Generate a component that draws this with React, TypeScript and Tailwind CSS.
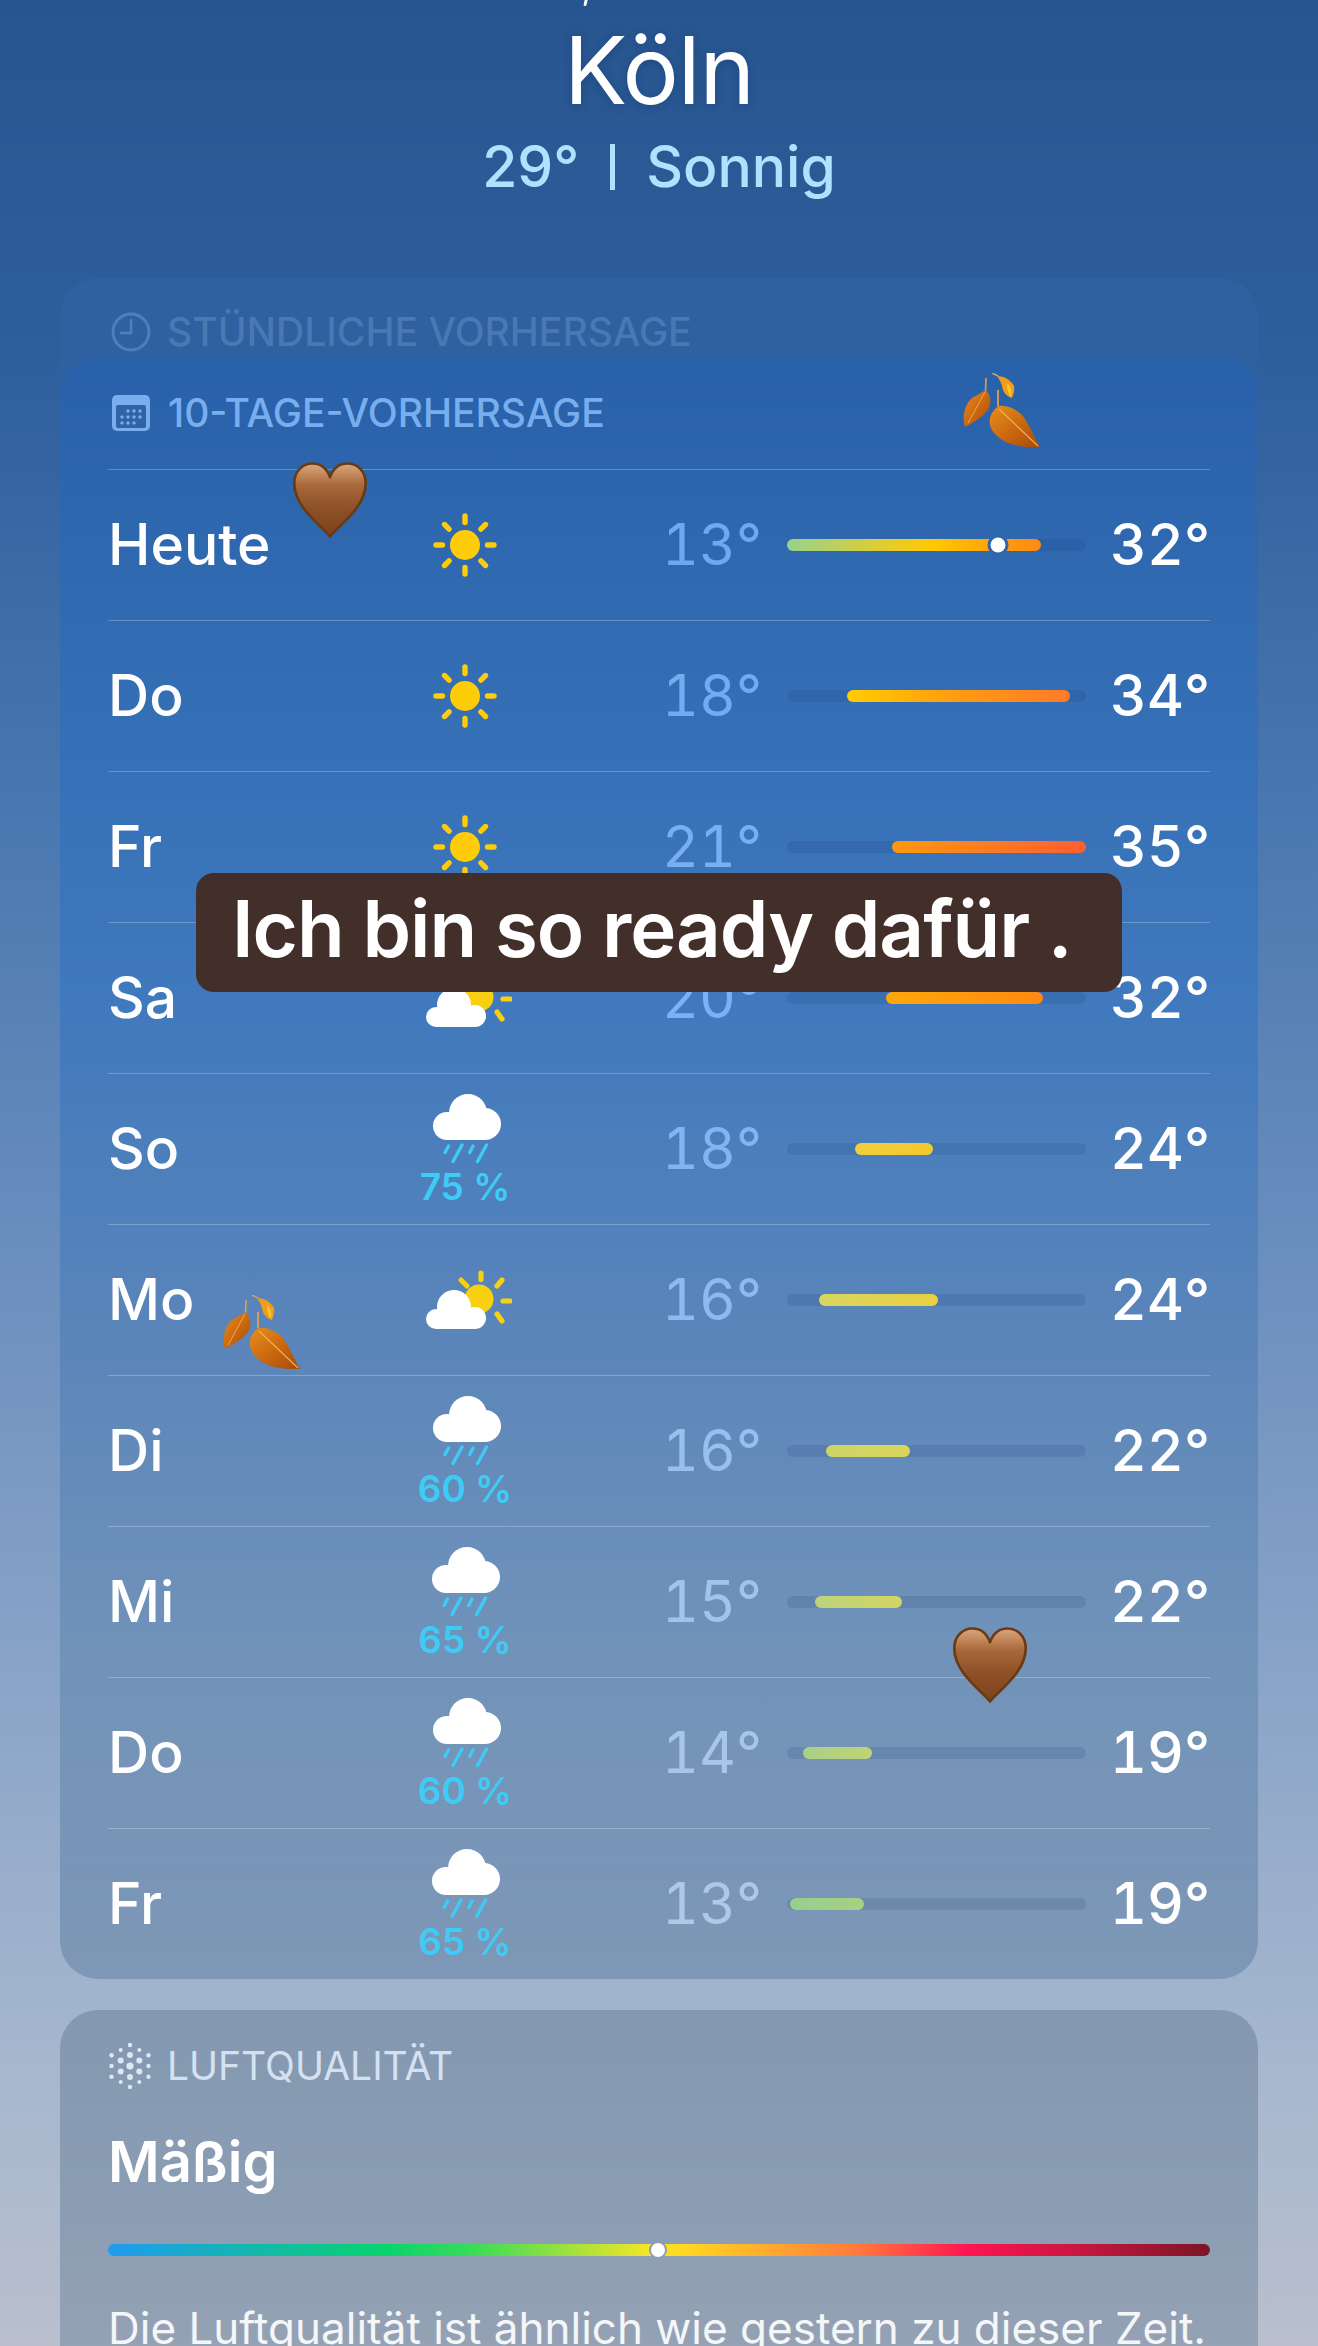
import React from "react";

type Kind = "sun" | "suncloud" | "rain";
const rows: { day: string; kind: Kind; pct?: string; low: string; high: string; start: number; end: number; grad: string; lowCls: string; dot?: number }[] = [
  { day: "Heute", kind: "sun", low: "13°", high: "32°", start: 0, end: 254, grad: "linear-gradient(90deg,#96d38c,#e5cc2b 40%,#ffc800 58%,#ff9a0f 85%,#ff8a0f)", lowCls: "text-[#6fa8ee]", dot: 211 },
  { day: "Do", kind: "sun", low: "18°", high: "34°", start: 60, end: 283, grad: "linear-gradient(90deg,#ffcc00,#ff9a10 50%,#ff7a2a)", lowCls: "text-[#73abf0]" },
  { day: "Fr", kind: "sun", low: "21°", high: "35°", start: 105, end: 299, grad: "linear-gradient(90deg,#ff9810,#ff5e30)", lowCls: "text-[#78aff2]" },
  { day: "Sa", kind: "suncloud", low: "20°", high: "32°", start: 99, end: 256, grad: "linear-gradient(90deg,#ffa80a,#ff8a10)", lowCls: "text-[#7cb2f3]" },
  { day: "So", kind: "rain", pct: "75 %", low: "18°", high: "24°", start: 68, end: 146, grad: "linear-gradient(90deg,#f0cf3a,#f5c82f)", lowCls: "text-[#82b5f0]" },
  { day: "Mo", kind: "suncloud", low: "16°", high: "24°", start: 32, end: 151, grad: "linear-gradient(90deg,#d9d560,#e8d040)", lowCls: "text-[#8cbaf0]" },
  { day: "Di", kind: "rain", pct: "60 %", low: "16°", high: "22°", start: 39, end: 123, grad: "linear-gradient(90deg,#cdd46a,#dcd45a)", lowCls: "text-[#98c0ee]" },
  { day: "Mi", kind: "rain", pct: "65 %", low: "15°", high: "22°", start: 28, end: 115, grad: "linear-gradient(90deg,#bcd37c,#d2d562)", lowCls: "text-[#a0c4ec]" },
  { day: "Do", kind: "rain", pct: "60 %", low: "14°", high: "19°", start: 16, end: 85, grad: "linear-gradient(90deg,#a8d088,#bfd474)", lowCls: "text-[#a8c6e8]" },
  { day: "Fr", kind: "rain", pct: "65 %", low: "13°", high: "19°", start: 3, end: 77, grad: "linear-gradient(90deg,#96cf8e,#a8d082)", lowCls: "text-[#aec8e6]" },
];

function Sun() {
  const rays = [0, 45, 90, 135, 180, 225, 270, 315];
  return (
    <svg width="66" height="66" viewBox="0 0 66 66">
      <circle cx="33" cy="33" r="15" fill="#ffcc0a" />
      {rays.map((a) => (
        <line key={a} x1="33" y1="10.5" x2="33" y2="4" stroke="#ffcc0a" strokeWidth="5.4" strokeLinecap="round" transform={`rotate(${a} 33 33)`} />
      ))}
    </svg>
  );
}

function Cloud() {
  return (
    <g fill="#fff">
      <circle cx="35" cy="19" r="19" />
      <circle cx="14" cy="32" r="14" />
      <circle cx="52" cy="30" r="16" />
      <rect x="14" y="24" width="38" height="22" />
    </g>
  );
}

function Rain() {
  return (
    <svg width="68" height="70" viewBox="0 0 68 70">
      <Cloud />
      <g stroke="#3ecbf5" strokeWidth="3.4" strokeLinecap="round">
        <line x1="15.6" y1="52" x2="12" y2="58.5" />
        <line x1="29" y1="51" x2="20" y2="67.5" />
        <line x1="40" y1="52" x2="36.7" y2="58.5" />
        <line x1="53.5" y1="51" x2="44.5" y2="67.5" />
      </g>
    </svg>
  );
}

function SunCloud() {
  return (
    <svg width="86" height="60" viewBox="0 0 86 60">
      <circle cx="53" cy="29" r="14.5" fill="#f9d00f" />
      <g stroke="#f9d00f" strokeWidth="5.2" strokeLinecap="round">
        <line x1="55" y1="3" x2="55" y2="9.5" />
        <line x1="76" y1="10" x2="71" y2="16" />
        <line x1="77" y1="31" x2="84" y2="31" />
        <line x1="71" y1="44" x2="76" y2="51" />
        <line x1="35" y1="10" x2="41" y2="16" />
      </g>
      <g fill="#fff">
        <circle cx="28" cy="37" r="17" />
        <circle cx="10" cy="49" r="10" />
        <circle cx="49" cy="48" r="11" />
        <rect x="10" y="40" width="39" height="19" />
      </g>
    </svg>
  );
}

function Heart({ id }: { id: string }) {
  return (
    <svg width="76" height="76" viewBox="0 0 100 100">
      <defs>
        <linearGradient id={id} x1="0" y1="0" x2="0" y2="1">
          <stop offset="0" stopColor="#dba87c" />
          <stop offset="0.3" stopColor="#a8683a" />
          <stop offset="0.6" stopColor="#8f5127" />
          <stop offset="1" stopColor="#7c431b" />
        </linearGradient>
      </defs>
      <path d="M50 98C38 83 3 60 3 28C3 12 14 2 27 2C38 2 46 9 50 20C54 9 62 2 73 2C86 2 97 12 97 28C97 60 62 83 50 98Z" fill={`url(#${id})`} stroke="#6b3a12" strokeWidth="3.5" strokeLinejoin="round" />
    </svg>
  );
}

function Leaves({ id }: { id: string }) {
  return (
    <svg width="80" height="78" viewBox="0 0 80 78">
      <defs>
        <linearGradient id={id} x1="0" y1="0" x2="1" y2="1">
          <stop offset="0" stopColor="#e98f1c" />
          <stop offset="0.55" stopColor="#c9660f" />
          <stop offset="1" stopColor="#a34c0c" />
        </linearGradient>
      </defs>
      <path d="M24 5L23.5 18" stroke="#e0a050" strokeWidth="1.6" fill="none" />
      <path d="M23.5 17C29 22 30 30 26 37C20 45 10 50 3 54C0 44 2 33 9 26C14 22 20 20 23.5 17Z" fill={`url(#${id})`} />
      <path d="M23 19L6 50" stroke="#efa94a" strokeWidth="1" fill="none" />
      <path d="M36 17L36 33" stroke="#e0a050" strokeWidth="1.8" fill="none" />
      <path d="M36 33C44 32 52 35 59 41C66 48 72 64 78 74C66 74 52 74 42 68C32 62 26 54 28 45C29 40 33 36 36 33Z" fill={`url(#${id})`} />
      <path d="M37 36L76 73" stroke="#f2b05a" strokeWidth="1.1" fill="none" />
      <path d="M30 0L36 3" stroke="#e0a050" strokeWidth="1.5" fill="none" />
      <path d="M35 3C42 3 49 7 52 13C53 18 51 22 50 25C44 23 41 19 40 13C39 9 37 6 35 3Z" fill="#ee9d1e" />
      <path d="M45 10C49 13 50 19 49 24C46 21 45 15 45 10Z" fill="#ffc52a" />
    </svg>
  );
}

function Clock() {
  return (
    <svg width="40" height="40" viewBox="0 0 40 40" fill="none" stroke="#4f7fba">
      <circle cx="20" cy="20" r="18" strokeWidth="3" />
      <path d="M20 8V21H10" strokeWidth="2.6" strokeLinecap="round" strokeLinejoin="round" />
    </svg>
  );
}

function Calendar() {
  const dots: [number, number][] = [
    [18, 16], [24, 16], [30, 16],
    [12, 22], [18, 22], [24, 22], [30, 22],
    [12, 28], [18, 28], [24, 28],
  ];
  return (
    <svg width="40" height="36" viewBox="0 0 40 36">
      <rect x="1" y="0" width="38" height="36" rx="5" fill="#78aeee" />
      <rect x="5" y="10" width="30" height="23" rx="2" fill="#2f63a8" />
      {dots.map(([x, y]) => (
        <circle key={`${x}-${y}`} cx={x - 1} cy={y} r="1.7" fill="#78aeee" />
      ))}
    </svg>
  );
}

function AirDots() {
  const dots: [number, number, number][] = [
    [0, 0, 3.6],
    [0, -11, 3], [0, 11, 3], [-9.3, -5.5, 3], [9.3, -5.5, 3], [-9.3, 5.5, 3], [9.3, 5.5, 3],
    [0, -21, 2.2], [0, 21, 2.2],
    [-9.3, -16, 2], [9.3, -16, 2], [-9.3, 16, 2], [9.3, 16, 2],
    [-18.5, 0, 2.2], [18.5, 0, 2.2], [-18.5, -10.7, 2.2], [18.5, -10.7, 2.2], [-18.5, 10.7, 2.2], [18.5, 10.7, 2.2],
  ];
  return (
    <svg width="44" height="46" viewBox="0 0 44 46">
      {dots.map(([x, y, r]) => (
        <circle key={`${x}-${y}`} cx={22 + x} cy={23 + y} r={r} fill="#dbe8f6" />
      ))}
    </svg>
  );
}

export default function App() {
  return (
    <div className="relative h-[2346px] w-full overflow-hidden bg-[linear-gradient(180deg,#27558f_0%,#2e5e9c_15%,#4a78b0_35%,#6d90bf_55%,#95accb_78%,#a6b7ce_88%,#b9bfcd_100%)] font-['Inter','Liberation_Sans',sans-serif]">
      <div className="flex flex-col items-center pt-[14px]">
        <div className="text-[94px] leading-[112px] font-normal tracking-[-1px] text-white [text-shadow:0_2px_8px_rgba(20,50,100,0.35)]">Köln</div>
        <div className="mt-[5px] flex h-[72px] items-center text-[57px] leading-[72px] font-medium text-[#aee3ff]">
          <span>29°</span>
          <span className="mx-[31px] h-[46px] w-[5px] bg-[#aee3ff]" />
          <span>Sonnig</span>
        </div>
      </div>

      <div className="mx-[60px] mt-[75px] h-[180px] rounded-[38px] bg-[#2f60a0] px-[48px] pt-[32px]">
        <div className="flex items-center gap-[16px] pl-[3px]">
          <Clock />
          <span className="text-[39px] leading-[44px] font-medium text-[#4a78b2]">STÜNDLICHE VORHERSAGE</span>
        </div>
      </div>

      <div className="relative mx-[60px] -mt-[101px] rounded-[38px] bg-[linear-gradient(180deg,#2861a9_0%,#3670b6_25%,#4079bd_40%,#5a85ba_60%,#7193b9_80%,#7e97b6_100%)] px-[48px]">
        <div className="flex h-[112px] items-center gap-[17px] pl-[3px]">
          <Calendar />
          <span className="text-[39px] leading-[44px] font-medium text-[#78aeee]">10-TAGE-VORHERSAGE</span>
        </div>
        {rows.map((r, i) => (
          <div key={i} className="flex h-[151px] items-center border-t-[1.5px] border-white/25">
            <div className="w-[292px] text-[57px] leading-[64px] font-medium text-white">{r.day}</div>
            <div className="flex h-full w-[130px] flex-col items-center">
              {r.kind === "sun" && (
                <div className="flex h-full items-center">
                  <Sun />
                </div>
              )}
              {r.kind === "suncloud" && (
                <div className="flex h-full items-center pl-[8px]">
                  <SunCloud />
                </div>
              )}
              {r.kind === "rain" && (
                <div className="flex flex-col items-center pt-[20px]">
                  <div className="pl-[3px]">
                    <Rain />
                  </div>
                  <span className="mt-[2px] text-[37px] leading-[42px] font-semibold whitespace-nowrap text-[#3ecbf5]">{r.pct}</span>
                </div>
              )}
            </div>
            <div className={`w-[232px] text-right text-[57px] leading-[64px] font-normal tabular-nums ${r.lowCls}`}>{r.low}</div>
            <div className="ml-[25px] h-[12px] w-[299px] rounded-full bg-[#1d3f70]/15">
              <div className="relative h-full rounded-full" style={{ marginLeft: r.start, width: r.end - r.start, background: r.grad }}>
                {r.dot !== undefined && (
                  <span className="absolute top-1/2 h-[15px] w-[15px] -translate-x-1/2 -translate-y-1/2 rounded-full bg-white shadow-[0_0_0_3px_#2e66ac]" style={{ left: r.dot }} />
                )}
              </div>
            </div>
            <div className="flex-1 text-right text-[57px] leading-[64px] font-medium text-white tabular-nums">{r.high}</div>
          </div>
        ))}
      </div>

      <div className="mx-[60px] mt-[31px] h-[420px] rounded-[38px] bg-[linear-gradient(180deg,#8398b1_0%,#8a9db3_45%,#9ba4b5_100%)] px-[48px] pt-[33px]">
        <div className="flex items-center gap-[15px]">
          <AirDots />
          <span className="text-[39px] leading-[44px] font-normal text-[#d5e1f0]">LUFTQUALITÄT</span>
        </div>
        <div className="mt-[37px] text-[56px] leading-[72px] font-semibold text-white">Mäßig</div>
        <div className="relative mt-[46px] h-[12px] rounded-full bg-[linear-gradient(90deg,#1f9af2_0%,#08d36e_25%,#38dc58_33%,#f3e528_49%,#ffd920_52%,#ff7a3c_68%,#ff1452_78%,#c8173f_88%,#7c1428_100%)]">
          <span className="absolute top-1/2 left-[550px] h-[14px] w-[14px] -translate-x-1/2 -translate-y-1/2 rounded-full bg-white shadow-[0_0_0_2px_#8d9cb0]" />
        </div>
        <div className="mt-[44px] text-[44px] leading-[56px] font-normal whitespace-nowrap text-white/90">Die Luftqualität ist ähnlich wie gestern zu dieser Zeit.</div>
      </div>

      <span className="absolute top-0 left-[584px] h-[6px] w-[3px] -skew-x-12 rounded-b-sm bg-white" />

      <div className="absolute top-[462px] left-[292px]"><Heart id="h1" /></div>
      <div className="absolute top-[1627px] left-[952px]"><Heart id="h2" /></div>
      <div className="absolute top-[373px] left-[962px]"><Leaves id="l1" /></div>
      <div className="absolute top-[1295px] left-[222px]"><Leaves id="l2" /></div>

      <div className="absolute top-[873px] left-[196px] flex h-[119px] w-[926px] items-center rounded-[18px] bg-[#432f2a] pb-[8px] pl-[36px]">
        <span className="text-[78px] leading-[90px] font-semibold tracking-[-1px] whitespace-nowrap text-white">Ich bin so ready dafür .</span>
      </div>
    </div>
  );
}
